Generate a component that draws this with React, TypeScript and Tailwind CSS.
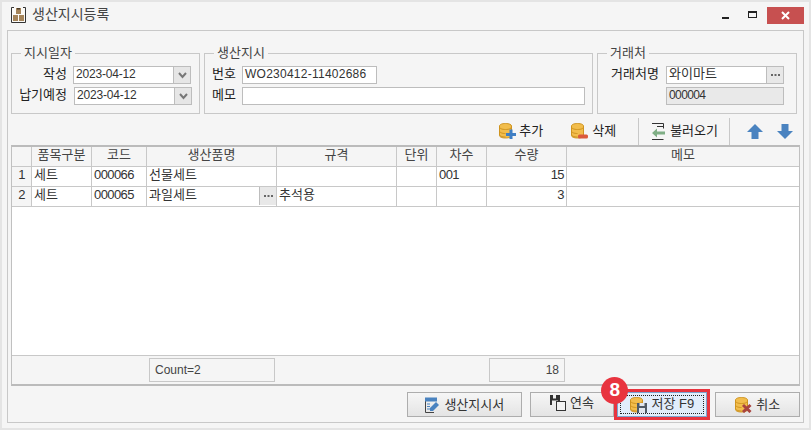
const FONT = "font-['Liberation_Sans','Noto_Sans_CJK_KR',sans-serif]";

function Coins({ children }: { children?: React.ReactNode }) {
  return (
    <svg width="17" height="16" viewBox="0 0 17 16" className="shrink-0">
      <path d="M0.500 3c0-1.500 2.500-2.500 6-2.500s6 1 6 2.500v9.500c0 1.500-2.500 2.500-6 2.500s-6-1-6-2.500z" fill="#f2bd4c" stroke="#cf9420" />
      <path d="M0.500 4c0 1.500 2.500 2.500 6 2.500s6-1 6-2.500M0.500 8c0 1.500 2.500 2.500 6 2.500M0.500 11.500c0 1.500 2.500 2.500 6 2.500" fill="none" stroke="#cf9420" />
      {children}
    </svg>
  );
}

function DotsButton({ className }: { className: string }) {
  return (
    <span className={`flex items-center justify-center bg-[#e8e8e8] ${className}`}>
      <svg width="9" height="2" viewBox="0 0 9 2">
        <path d="M0 0h2v2H0zM3.500 0h2v2h-2zM7 0h2v2H7z" fill="#666" />
      </svg>
    </span>
  );
}

function DateInput({ value, className }: { value: string; className: string }) {
  return (
    <div className={`flex h-[18px] border border-[#bdbdbd] bg-white ${className}`}>
      <span className="flex-1 pl-[2px] text-[12px] leading-[14px] tracking-[-0.2px] text-[#333]">{value}</span>
      <span className="flex w-[17px] items-center justify-center border-l border-[#bdbdbd] bg-[#e6e6e6]">
        <svg width="9" height="7" viewBox="0 0 9 7">
          <path d="M1 1l3.500 4L8 1" fill="none" stroke="#777" strokeWidth="2" />
        </svg>
      </span>
    </div>
  );
}

function Group({ title, className, children }: { title: string; className: string; children: React.ReactNode }) {
  return (
    <fieldset className={`h-[68px] border border-[#c8c8c8] ${className}`}>
      <legend className="ml-[9px] px-[3px] text-[13px] leading-[14px] text-[#444]">{title}</legend>
      {children}
    </fieldset>
  );
}

const COLS = "grid grid-cols-[20px_60px_55px_130px_120px_40px_50px_80px_1fr]";

const HEADERS = ["", "품목구분", "코드", "생산품명", "규격", "단위", "차수", "수량", "메모"];

const ROWS = [
  { no: "1", kind: "세트", code: "000066", name: "선물세트", spec: "", seq: "001", qty: "15", more: false },
  { no: "2", kind: "세트", code: "000065", name: "과일세트", spec: "추석용", seq: "", qty: "3", more: true },
];

const LABEL = "text-[13px] leading-[16px] text-[#222]";
const DIGITS = "text-[12px] tracking-[-0.600px]";

function Cell({ children, className = "" }: { children?: React.ReactNode; className?: string }) {
  return (
    <div className={`h-[20px] overflow-hidden whitespace-nowrap border-r border-b border-[#c8c8c8] px-[2px] text-[13px] leading-[16px] text-[#333] ${className}`}>
      {children}
    </div>
  );
}

function BottomButton({ label, icon, className }: { label: string; icon: React.ReactNode; className: string }) {
  return (
    <button className={`flex h-[25px] items-center justify-center gap-[4px] border border-[#adadad] bg-gradient-to-b from-[#f6f6f6] to-[#e4e4e4] text-[13px] text-[#333] ${className}`}>
      {icon}
      <span>{label}</span>
    </button>
  );
}

export default function App() {
  return (
    <div className={`flex h-[430px] w-[811px] flex-col overflow-hidden border-2 border-[#e4e4e4] bg-[#f5f5f5] ${FONT}`}>
      {/* title bar */}
      <div className="flex h-[28px] shrink-0 items-center pb-[3px]">
        <svg width="15" height="16" viewBox="0 0 15 16" className="ml-[9px]">
          <path d="M3 0.500H0.500v15h14v-15H12" fill="#fbfaf7" stroke="#333" />
          <rect x="5" y="1" width="5" height="6" fill="#a5845a" />
          <rect x="6" y="1" width="3" height="1.500" fill="#4a3b28" />
          <rect x="2" y="8" width="5" height="6" fill="#a5845a" />
          <rect x="8" y="8" width="5" height="6" fill="#a5845a" />
        </svg>
        <span className="ml-[6px] text-[14px] text-[#444]">생산지시등록</span>
        <div className="ml-auto flex items-center">
          <span className="mt-[6px] h-[2px] w-[7px] bg-[#222]" />
          <span className="ml-[19px] h-[7px] w-[9px] border border-t-2 border-[#222]" />
          <span className="ml-[10px] mr-[5px] mt-[2px] flex h-[17px] w-[37px] items-center justify-center bg-[#c75050]">
            <svg width="9" height="9" viewBox="0 0 9 9">
              <path d="M1 1l7 7M8 1l-7 7" stroke="#fff" strokeWidth="2" />
            </svg>
          </span>
        </div>
      </div>

      {/* main panel */}
      <div className="ml-[5px] mr-[5px] mb-[5px] flex flex-1 flex-col border border-[#c8c8c8] px-[3px] pt-[15px]">
        <div className="flex gap-[4px]">
          <Group title="지시일자" className="w-[189px] shrink-0">
            <div className="mt-[6px] flex">
              <span className={`w-[55px] text-right ${LABEL}`}>작성</span>
              <DateInput value="2023-04-12" className="ml-[6px] w-[118px]" />
            </div>
            <div className="mt-[3px] flex">
              <span className={`w-[55px] whitespace-nowrap text-right ${LABEL}`}>납기예정</span>
              <DateInput value="2023-04-12" className="ml-[7px] w-[118px]" />
            </div>
          </Group>
          <Group title="생산지시" className="w-[389px] shrink-0">
            <div className="mt-[6px] flex">
              <span className={`ml-[7px] w-[30px] ${LABEL}`}>번호</span>
              <div className="h-[18px] w-[135px] border border-[#bdbdbd] bg-white pl-[2px] text-[12px] leading-[14px] tracking-[0.250px] text-[#333]">WO230412-11402686</div>
            </div>
            <div className="mt-[3px] flex">
              <span className={`ml-[7px] w-[30px] ${LABEL}`}>메모</span>
              <div className="h-[18px] w-[343px] border border-[#bdbdbd] bg-white" />
            </div>
          </Group>
          <Group title="거래처" className="w-[200px] shrink-0">
            <div className="mt-[6px] flex">
              <span className={`ml-[13px] w-[55px] whitespace-nowrap ${LABEL}`}>거래처명</span>
              <div className="flex h-[18px] w-[118px] border border-[#bdbdbd] bg-white">
                <span className="flex-1 pl-[2px] text-[13px] leading-[14px] text-[#333]">와이마트</span>
                <DotsButton className="w-[17px] border-l border-[#bdbdbd]" />
              </div>
            </div>
            <div className={`mt-[3px] ml-[68px] h-[18px] w-[118px] border border-[#bdbdbd] bg-[#e9e9e9] pl-[2px] leading-[14px] text-[#333] ${DIGITS}`}>000004</div>
          </Group>
        </div>

        {/* toolbar */}
        <div className="mt-[3px] flex h-[28px] items-center justify-end pr-[7px] text-[13px] text-[#222]">
          <div className="flex items-center gap-[3px]">
            <Coins>
              <rect x="7" y="10" width="10" height="3" fill="#3f7fc4" />
              <rect x="10.500" y="6.500" width="3" height="9.500" fill="#3f7fc4" />
            </Coins>
            <span>추가</span>
          </div>
          <div className="ml-[28px] flex items-center gap-[4px]">
            <Coins>
              <rect x="7" y="11.500" width="10" height="4" rx="1.500" fill="#db5a3c" />
            </Coins>
            <span>삭제</span>
          </div>
          <span className="ml-[22px] h-[27px] w-px bg-[#c8c8c8]" />
          <div className="ml-[12px] flex items-center gap-[5px]">
            <svg width="14" height="17" viewBox="0 0 14 17">
              <path d="M1 0.500h11.500v5M6 3.500h6M1 16.500h11.500" stroke="#333" fill="none" />
              <path d="M1 10l5-4.500V8.500h8v3H6v3z" fill="#7fae85" />
            </svg>
            <span>불러오기</span>
          </div>
          <span className="ml-[11px] h-[27px] w-px bg-[#c8c8c8]" />
          <svg width="16" height="15" viewBox="0 0 16 15" className="ml-[17px]">
            <path d="M8 0l8 8h-4.500v7h-7V8H0z" fill="#4a83c0" />
          </svg>
          <svg width="16" height="15" viewBox="0 0 16 15" className="ml-[14px]">
            <path d="M8 15L0 7h4.500V0h7v7H16z" fill="#4a83c0" />
          </svg>
        </div>

        {/* grid */}
        <div className="flex h-[241px] w-[789px] flex-col border border-t-2 border-b-2 border-[#c0c0c0] border-t-[#bbbbbb] border-b-[#bbbbbb]">
          <div className={COLS}>
            {HEADERS.map((h, i) => (
              <Cell key={i} className={`text-center text-[#444] ${i === 8 ? "border-r-0" : ""}`}>{h}</Cell>
            ))}
          </div>
          <div className="flex-1 border-b border-[#c8c8c8] bg-white">
            {ROWS.map((r) => (
              <div key={r.no} className={COLS}>
                <Cell className={`bg-[#f5f5f5] text-center ${DIGITS}`}>{r.no}</Cell>
                <Cell>{r.kind}</Cell>
                <Cell className={DIGITS}>{r.code}</Cell>
                <Cell className="relative">
                  {r.name}
                  {r.more && <DotsButton className="absolute right-0 top-0 h-[18px] w-[17px] border-l border-[#bdbdbd]" />}
                </Cell>
                <Cell>{r.spec}</Cell>
                <Cell />
                <Cell className={DIGITS}>{r.seq}</Cell>
                <Cell className={`text-right ${DIGITS}`}>{r.qty}</Cell>
                <Cell className="border-r-0" />
              </div>
            ))}
          </div>
          <div className={`${COLS} h-[28px] pt-[2px]`}>
            <div className="col-start-4 mx-[2px] h-[24px] border border-[#c8c8c8] pl-[5px] text-[12px] leading-[22px] text-[#444]">Count=2</div>
            <div className="col-start-8 mx-[2px] h-[24px] border border-[#c8c8c8] pr-[5px] text-right text-[12px] leading-[22px] text-[#444]">18</div>
          </div>
        </div>

        {/* bottom buttons */}
        <div className="mt-[6px] flex pl-[396px]">
          <BottomButton
            label="생산지시서"
            className="w-[115px]"
            icon={
              <svg width="16" height="16" viewBox="0 0 16 16">
                <path d="M1.500 4v11.500H10" fill="none" stroke="#444" />
                <rect x="1" y="0.500" width="12" height="4" fill="#4a83c0" />
                <path d="M3 7h3M3 9.500h3M3 12h3" stroke="#4a83c0" strokeWidth="1.200" />
                <path d="M6 14l0-3 6-6 3 3-6 6z" fill="#4a83c0" />
              </svg>
            }
          />
          <BottomButton
            label="연속"
            className="ml-[8px] w-[85px] pb-[3px]"
            icon={
              <svg width="16" height="16" viewBox="0 0 16 16">
                <path d="M0 0h3v3.500h3V0h4v5.500H0zM0 5.500h2V10h6V5.500h2V10H0z" fill="#333" />
                <rect x="6.500" y="6.500" width="9" height="9" fill="#f3f3f3" stroke="#333" />
              </svg>
            }
          />
          <div className="relative ml-[3px] w-[90px]">
            <button className="relative flex h-[25px] w-[90px] items-center justify-center gap-[4px] border border-[#7da2ce] bg-[#e1edfb] text-[13px] text-[#333]">
              <span className="absolute inset-[2px] border border-dotted border-[#222]" />
              <Coins>
                <rect x="7" y="6" width="10" height="10" fill="#4e5a66" />
                <rect x="9.500" y="6" width="5" height="3" fill="#dfe6ee" />
                <rect x="9" y="11" width="6" height="5" fill="#dfe6ee" />
              </Coins>
              <span className="pb-[2px]">저장 F9</span>
            </button>
            <span className="pointer-events-none absolute left-[-3px] top-[-3px] h-[31px] w-[96px] border-[3px] border-[#e8343f]" />
            <span className="absolute left-[-16px] top-[-15px] flex h-[27px] w-[27px] items-center justify-center rounded-full bg-[#e8343f] text-[19px] font-bold text-white">8</span>
          </div>
          <BottomButton
            label="취소"
            className="ml-[8px] w-[85px]"
            icon={
              <Coins>
                <path d="M8 8l7.500 7M15.500 8l-7.500 7" stroke="#a8443f" strokeWidth="3" />
              </Coins>
            }
          />
        </div>
      </div>
    </div>
  );
}
